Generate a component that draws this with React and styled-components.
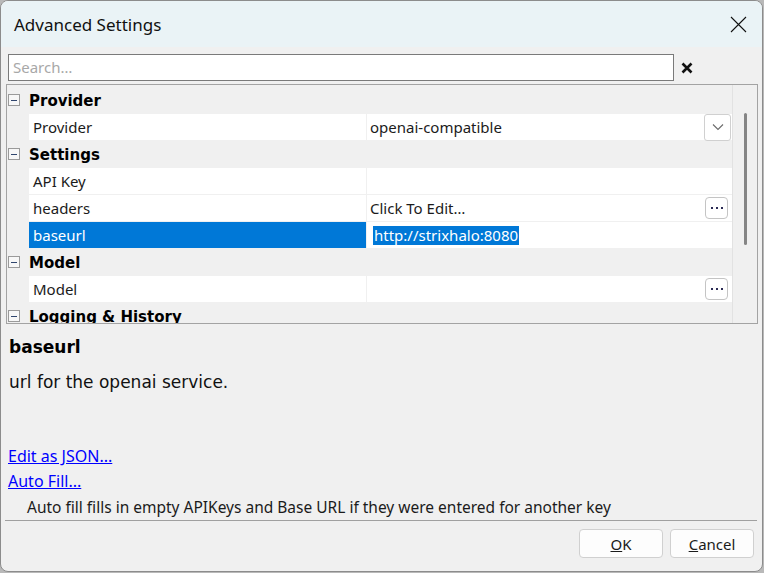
import styled, { createGlobalStyle } from "styled-components";

const GlobalStyle = createGlobalStyle`
  html, body {
    margin: 0;
    padding: 0;
    background: #b9b9b9;
  }
  * {
    box-sizing: border-box;
  }
`;

const UI_FONT = `"Noto Sans", "Open Sans", sans-serif`;
const CLASSIC_FONT = `"DejaVu Sans", Verdana, sans-serif`;

const Window = styled.div`
  width: 763px;
  height: 572px;
  display: flex;
  flex-direction: column;
  background: #f0f0f0;
  border: 1px solid #8c8c8c;
  border-radius: 8px;
  overflow: hidden;
  font-family: ${UI_FONT};
  color: #1b1b1b;
`;

const TitleBar = styled.div`
  height: 46px;
  flex: none;
  display: flex;
  align-items: center;
  justify-content: space-between;
  padding: 0 15px 0 13px;
  background: #eaf3f6;
  font-size: 17px;
  color: #111;
`;

const CloseButton = styled.button`
  border: none;
  background: transparent;
  padding: 0;
  width: 18px;
  height: 18px;
  display: flex;
  align-items: center;
  justify-content: center;
`;

const SearchRow = styled.div`
  display: flex;
  align-items: center;
  gap: 6px;
  margin: 7px 0 0 7px;
`;

const SearchInput = styled.input`
  width: 666px;
  height: 27px;
  border: 1px solid #7a7a7a;
  background: #fff;
  padding: 0 4px 2px;
  font-family: ${UI_FONT};
  font-size: 15px;
  color: #111;
  outline: none;

  &::placeholder {
    color: #a8a8a8;
  }
`;

const ClearButton = styled.button`
  border: none;
  background: transparent;
  padding: 0;
  width: 14px;
  height: 14px;
  display: flex;
  align-items: center;
  justify-content: center;
`;

const Grid = styled.div`
  margin: 3px 0 0 5px;
  width: 752px;
  height: 240px;
  flex: none;
  display: flex;
  border: 1px solid #a3a3a3;
  background: #f0f0f0;
  overflow: hidden;
`;

const GridBody = styled.div`
  flex: 1;
  display: flex;
  flex-direction: column;
  gap: 1px;
  padding-top: 2px;
  overflow: hidden;
`;

const ScrollTrack = styled.div`
  width: 25px;
  flex: none;
  display: flex;
  justify-content: center;
  padding-top: 28px;
  border-left: 1px solid #e2e2e2;
`;

const ScrollThumb = styled.div`
  width: 3px;
  height: 132px;
  border-radius: 2px;
  background: #858585;
`;

const CategoryRow = styled.div`
  height: 26px;
  flex: none;
  display: flex;
  align-items: center;
  gap: 9px;
  padding: 2px 0 0 1px;
  font-family: ${CLASSIC_FONT};
  font-weight: bold;
  font-size: 15px;
  color: #000;
`;

const ExpandBox = styled.span`
  width: 12px;
  height: 12px;
  margin-top: -2px;
  border: 1px solid #9a9a9a;
  background: #f7f7f7;
  display: flex;
  align-items: center;
  justify-content: center;

  &::after {
    content: "";
    width: 6px;
    height: 1px;
    background: #30466e;
  }
`;

const PropRow = styled.div`
  height: 26px;
  flex: none;
  display: flex;
  gap: 1px;
  padding-left: 22px;
`;

const LabelCell = styled.div`
  width: 337px;
  display: flex;
  align-items: center;
  padding-left: 4px;
  font-size: 15px;
  background: ${({ $selected }) => ($selected ? "#0078d7" : "#fff")};
  color: ${({ $selected }) => ($selected ? "#fff" : "#1b1b1b")};
`;

const ValueCell = styled.div`
  flex: 1;
  display: flex;
  align-items: center;
  padding-left: 3px;
  padding-right: ${({ $pad }) => $pad}px;
  font-size: 15px;
  background: #fff;
`;

const Selection = styled.span`
  margin-left: 3px;
  padding: 0 1px;
  background: #0078d7;
  color: #fff;
  line-height: 19px;
`;

const DropButton = styled.button`
  margin-left: auto;
  width: 27px;
  height: 27px;
  border: 1px solid #d0d0d0;
  border-radius: 3px;
  background: #fff;
  padding: 0;
  display: flex;
  align-items: center;
  justify-content: center;
`;

const EllipsisButton = styled.button`
  margin-left: auto;
  width: 23px;
  height: 22px;
  border: 1px solid #c4c4c4;
  border-radius: 4px;
  background: #fff;
  padding: 0;
  display: flex;
  align-items: center;
  justify-content: center;
`;

const DescPanel = styled.div`
  height: 120px;
  flex: none;
  padding: 12px 8px 0;
  font-family: ${CLASSIC_FONT};
  color: #111;
`;

const DescTitle = styled.div`
  font-weight: bold;
  font-size: 17px;
  line-height: 22px;
  color: #000;
`;

const DescText = styled.div`
  margin-top: 13px;
  font-size: 17px;
  line-height: 22px;
`;

const LinkArea = styled.div`
  display: flex;
  flex-direction: column;
  padding: 0 7px;
`;

const Link = styled.a`
  font-size: 16px;
  line-height: 25px;
  color: #0000ff;
  text-decoration: underline;
  cursor: pointer;
  align-self: flex-start;
`;

const Hint = styled.div`
  font-size: 15.5px;
  line-height: 26px;
  padding-left: 19px;
  color: #1b1b1b;
`;

const Footer = styled.div`
  margin: 0 5px 0 4px;
  border-top: 1px solid #a0a0a0;
  padding: 8px 3px 0 0;
  display: flex;
  justify-content: flex-end;
  gap: 7px;
`;

const DialogButton = styled.button`
  width: 84px;
  height: 29px;
  border: 1px solid #d0d0d0;
  border-radius: 4px;
  background: #fdfdfd;
  font-family: ${UI_FONT};
  font-size: 15px;
  color: #1b1b1b;
  padding: 0;
`;

const Chevron = () => (
  <svg width="12" height="8" viewBox="0 0 12 8">
    <path d="M1 1.5 L6 6.5 L11 1.5" fill="none" stroke="#6a6a6a" strokeWidth="1.1" />
  </svg>
);

const Dots = () => (
  <svg width="14" height="4" viewBox="0 0 14 4">
    <rect x="1" y="1" width="2" height="2" fill="#2b2b55" />
    <rect x="6" y="1" width="2" height="2" fill="#2b2b55" />
    <rect x="11" y="1" width="2" height="2" fill="#2b2b55" />
  </svg>
);

const properties = [
  { type: "category", label: "Provider" },
  { label: "Provider", value: "openai-compatible", editor: "drop" },
  { type: "category", label: "Settings" },
  { label: "API Key", value: "" },
  { label: "headers", value: "Click To Edit…", editor: "dots" },
  { label: "baseurl", value: "http://strixhalo:8080", selected: true },
  { type: "category", label: "Model" },
  { label: "Model", value: "", editor: "dots" },
  { type: "category", label: "Logging & History" },
];

export default function App() {
  return (
    <>
      <GlobalStyle />
      <Window>
        <TitleBar>
          <span>Advanced Settings</span>
          <CloseButton aria-label="Close">
            <svg width="17" height="17" viewBox="0 0 17 17">
              <path d="M1 1 L16 16 M16 1 L1 16" stroke="#111" strokeWidth="1.1" />
            </svg>
          </CloseButton>
        </TitleBar>

        <SearchRow>
          <SearchInput placeholder="Search…" />
          <ClearButton aria-label="Clear">
            <svg width="12" height="12" viewBox="0 0 12 12">
              <path d="M1.5 1.5 L10.5 10.5 M10.5 1.5 L1.5 10.5" stroke="#111" strokeWidth="2.6" />
            </svg>
          </ClearButton>
        </SearchRow>

        <Grid>
          <GridBody>
            {properties.map((p, i) =>
              p.type === "category" ? (
                <CategoryRow key={i}>
                  <ExpandBox />
                  {p.label}
                </CategoryRow>
              ) : (
                <PropRow key={i}>
                  <LabelCell $selected={p.selected}>{p.label}</LabelCell>
                  <ValueCell $pad={p.editor === "drop" ? 1 : p.editor === "dots" ? 4 : 0}>
                    {p.selected ? <Selection>{p.value}</Selection> : p.value}
                    {p.editor === "drop" && (
                      <DropButton>
                        <Chevron />
                      </DropButton>
                    )}
                    {p.editor === "dots" && (
                      <EllipsisButton>
                        <Dots />
                      </EllipsisButton>
                    )}
                  </ValueCell>
                </PropRow>
              )
            )}
          </GridBody>
          <ScrollTrack>
            <ScrollThumb />
          </ScrollTrack>
        </Grid>

        <DescPanel>
          <DescTitle>baseurl</DescTitle>
          <DescText>url for the openai service.</DescText>
        </DescPanel>

        <LinkArea>
          <Link>Edit as JSON...</Link>
          <Link>Auto Fill...</Link>
          <Hint>Auto fill fills in empty APIKeys and Base URL if they were entered for another key</Hint>
        </LinkArea>

        <Footer>
          <DialogButton>
            <u>O</u>K
          </DialogButton>
          <DialogButton>
            <u>C</u>ancel
          </DialogButton>
        </Footer>
      </Window>
    </>
  );
}
